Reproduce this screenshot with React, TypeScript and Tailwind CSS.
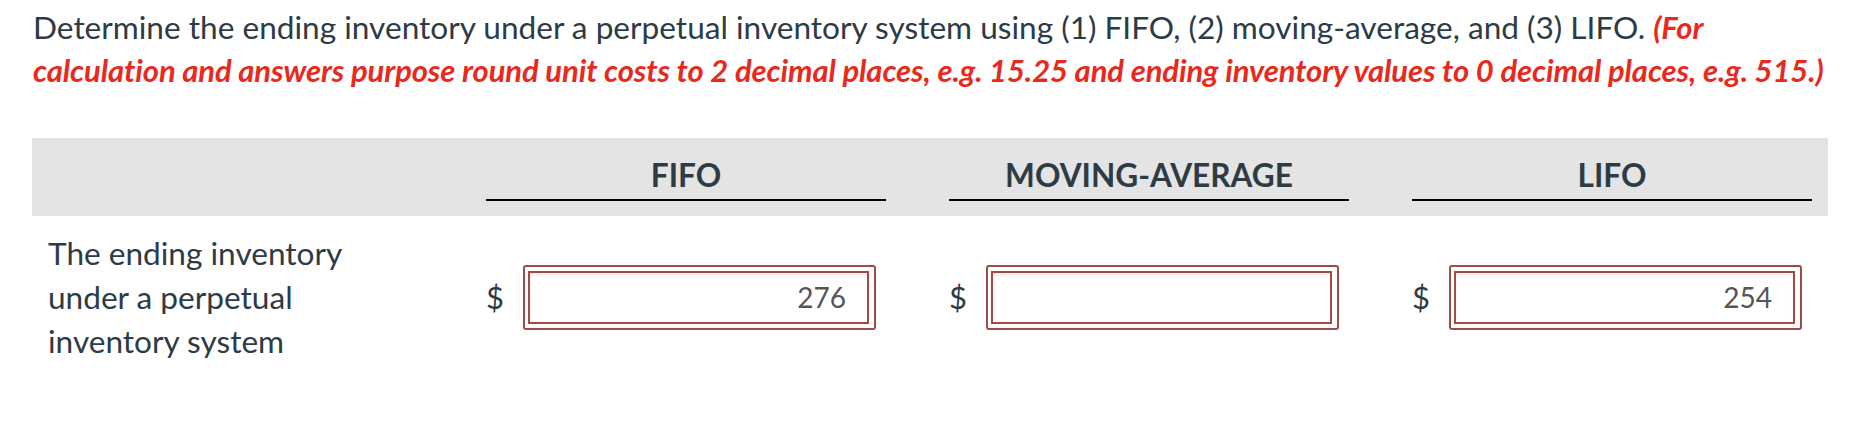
const columns = [
  { title: 'FIFO', value: '276' },
  { title: 'MOVING-AVERAGE', value: '' },
  { title: 'LIFO', value: '254' },
];

function AmountInput({ value }: { value: string }) {
  return (
    <div className="flex items-center">
      <span className="w-[16px] text-[31px] leading-none text-[#2d3b45]">$</span>
      <div className="ml-[21px] h-[65px] w-[353px] rounded-[3px] border-2 border-[#a04b47] py-[4px] pl-[3px] pr-[5px]">
        <div className="flex h-full items-center justify-end border-2 border-[#a04b47] bg-white pr-[21px] text-[28px] text-[#555555] shadow-[inset_0_3px_3px_rgba(0,0,0,0.06)]">
          {value}
        </div>
      </div>
    </div>
  );
}

export default function App() {
  return (
    <div className="min-h-[434px] bg-white font-['Lato','Liberation_Sans',sans-serif] text-[#2d3b45]">
      <p className="px-[33px] pt-[6px] text-[31.6px] leading-[43px]">
        Determine the ending inventory under a perpetual inventory system using (1) FIFO, (2) moving-average, and (3) LIFO.{' '}
        <span className="text-[31px] font-bold italic tracking-[-0.1px] text-[#e8291c]">
          (For calculation and answers purpose round unit costs to 2 decimal places, e.g. 15.25 and ending inventory values to 0 decimal places, e.g. 515.)
        </span>
      </p>

      <div className="mx-[32px] mt-[46px] w-[1796px]">
        <div className="grid h-[78px] grid-cols-[391px_400px_400px_400px] gap-x-[63px] bg-[#e4e4e4] pb-[15px]">
          <div />
          {columns.map((c) => (
            <div key={c.title} className="flex flex-col justify-end">
              <div className="border-b-2 border-black pb-[6px] text-center text-[31.6px] font-bold leading-[36px]">
                {c.title}
              </div>
            </div>
          ))}
        </div>

        <div className="grid grid-cols-[391px_400px_400px_400px] items-center gap-x-[63px] pt-[15px]">
          <div className="w-[330px] pl-[16px] text-[31.6px] leading-[44px]">
            The ending inventory under a perpetual inventory system
          </div>
          {columns.map((c) => (
            <AmountInput key={c.title} value={c.value} />
          ))}
        </div>
      </div>
    </div>
  );
}
